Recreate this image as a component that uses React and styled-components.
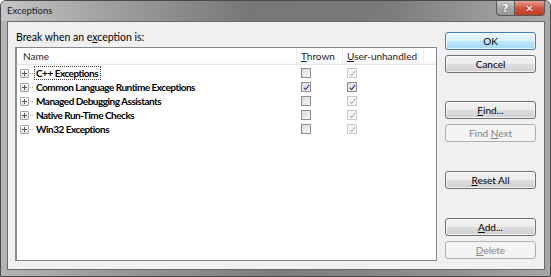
import React from "react";
import styled, { createGlobalStyle } from "styled-components";

const Global = createGlobalStyle`
  html, body { margin: 0; padding: 0; background: #fff; }
  body { font-family: Lato, "Noto Sans", sans-serif; }
`;

const Window = styled.div`
  width: 551px;
  height: 277px;
  box-sizing: border-box;
  display: flex;
  flex-direction: column;
  border: 1px solid #4a4a4a;
  border-radius: 6px 6px 0 0;
  background: linear-gradient(to right, #b4b4b4 0%, #9a9a9a 20%, #7c7c7c 50%, #8e8e8e 80%, #a6a6a6 100%);
  overflow: hidden;
`;

const TitleBar = styled.div`
  height: 20px;
  flex: none;
  display: flex;
  align-items: flex-start;
  padding-left: 6px;
  background: linear-gradient(to right, #c6c6c6 0%, #a2a2a2 18%, #777 45%, #7a7a7a 70%, #9c9c9c 90%, #aaaaaa 100%);
`;

const Title = styled.span`
  font-size: 9.5px;
  line-height: 19px;
  color: #1a1a1a;
  flex: 1;
`;

const Caption = styled.div`
  display: flex;
  margin-right: 5px;
`;

const CapBtn = styled.div`
  height: 15px;
  width: ${(p) => p.w}px;
  box-sizing: border-box;
  border: 1px solid #5a5a5a;
  border-top: none;
  display: flex;
  align-items: center;
  justify-content: center;
  font-family: "DejaVu Sans", sans-serif;
  font-weight: bold;
  font-size: 10px;
  color: #fff;
  background: ${(p) =>
    p.close
      ? "linear-gradient(to bottom, #e8a092 0%, #d0553f 50%, #c23a22 100%)"
      : "linear-gradient(to bottom, #c8c8c8 0%, #a8a8a8 50%, #989898 100%)"};
  border-radius: ${(p) => (p.close ? "0 0 4px 0" : "0 0 0 4px")};
  border-left: ${(p) => (p.close ? "none" : "1px solid #5a5a5a")};
  text-shadow: 0 0 2px rgba(0,0,0,0.5);
`;

const Client = styled.div`
  flex: 1;
  margin: 0 5px 6px 6px;
  background: #f0f0f0;
  border: 1px solid #6a6a6a;
  display: flex;
  padding: 8px 8px 8px 7px;
  gap: 8px;
`;

const Left = styled.div`
  flex: 1;
  display: flex;
  flex-direction: column;
`;

const Label = styled.div`
  font-size: 10.5px;
  color: #000;
  height: 17px;
  line-height: 14px;
  padding-left: 1px;
`;

const U = styled.span`
  text-decoration: underline;
`;

const ListBox = styled.div`
  flex: 1;
  background: #fff;
  border: 1px solid #828790;
  border-left: 2px solid #8e8e8e;
  display: flex;
  flex-direction: column;
`;

const Header = styled.div`
  height: 16px;
  display: grid;
  grid-template-columns: 280px 46px 81px 1fr;
  border-bottom: 1px solid #e5e5e5;
  background: linear-gradient(to bottom, #ffffff 0%, #ffffff 60%, #f7f8f9 100%);
`;

const HeadCell = styled.div`
  font-size: 10px;
  line-height: 16px;
  color: #1e1e1e;
  padding-left: ${(p) => p.pad || 4}px;
  border-right: ${(p) => (p.last ? "none" : "1px solid #ececec")};
  white-space: nowrap;
`;

const Rows = styled.div`
  display: flex;
  flex-direction: column;
  padding-top: 1px;
`;

const Row = styled.div`
  height: 14px;
  display: grid;
  grid-template-columns: 280px 46px 81px 1fr;
  align-items: center;
`;

const NameCell = styled.div`
  display: flex;
  align-items: center;
  padding-left: 3px;
`;

const Expander = styled.div`
  width: 9px;
  height: 9px;
  box-sizing: border-box;
  border: 1px solid #a6a6a6;
  border-radius: 1px;
  background: linear-gradient(#fff, #e2e2e2);
  position: relative;
  margin-right: 1px;
  &::before {
    content: "";
    position: absolute;
    left: 1px;
    top: 3px;
    width: 5px;
    height: 1px;
    background: #555;
  }
  &::after {
    content: "";
    position: absolute;
    left: 3px;
    top: 1px;
    width: 1px;
    height: 5px;
    background: #555;
  }
`;

const Dots = styled.div`
  width: 3px;
  border-top: 1px dotted #a0a0a0;
  margin-right: 1px;
`;

const NameText = styled.span`
  font-size: 10px;
  font-weight: bold;
  letter-spacing: -0.5px;
  line-height: 12px;
  padding: 0 2px 0 1px;
  color: #000;
  border: 1px dotted ${(p) => (p.focus ? "#444" : "transparent")};
  white-space: nowrap;
`;

const CheckCell = styled.div`
  padding-left: 4px;
  display: flex;
  align-items: center;
`;

const Box = styled.div`
  width: 10px;
  height: 10px;
  box-sizing: border-box;
  border: 1px solid ${(p) => (p.disabled ? "#c9c9c9" : "#8f8f8f")};
  background: ${(p) =>
    p.disabled ? "#f7f7f7" : "linear-gradient(135deg, #dcdcdc, #f6f6f6)"};
  display: flex;
  align-items: center;
  justify-content: center;
`;

const Buttons = styled.div`
  width: 91px;
  display: flex;
  flex-direction: column;
  padding-top: 2px;
`;

const Btn = styled.div`
  height: 18px;
  box-sizing: border-box;
  margin-top: ${(p) => p.mt || 0}px;
  border: 1px solid ${(p) => (p.disabled ? "#adb2b5" : p.def ? "#3c7fb1" : "#707070")};
  border-radius: 3px;
  background: ${(p) =>
    p.disabled
      ? "#f4f4f4"
      : p.def
      ? "linear-gradient(to bottom, #eaf6fd 0%, #d9f0fc 50%, #bee6fd 51%, #a7d9f5 100%)"
      : "linear-gradient(to bottom, #f2f2f2 0%, #ebebeb 50%, #dddddd 51%, #cfcfcf 100%)"};
  box-shadow: inset 0 0 0 1px ${(p) => (p.disabled ? "transparent" : "rgba(255,255,255,0.7)")};
  font-size: 10px;
  line-height: 16px;
  text-align: center;
  color: ${(p) => (p.disabled ? "#838383" : "#000")};
`;

const Check = ({ disabled }) => (
  <svg width="7" height="7" viewBox="0 0 7 7">
    <path
      d="M0.8 3.6 L2.6 5.6 L6.2 0.8"
      fill="none"
      stroke={disabled ? "#b4b4b4" : "#2a3f8a"}
      strokeWidth="1.1"
    />
  </svg>
);

const rows = [
  { name: "C++ Exceptions", thrown: false, focus: true },
  { name: "Common Language Runtime Exceptions", thrown: true },
  { name: "Managed Debugging Assistants", thrown: false },
  { name: "Native Run-Time Checks", thrown: false },
  { name: "Win32 Exceptions", thrown: false },
];

export default function App() {
  return (
    <>
      <Global />
      <Window>
        <TitleBar>
          <Title>Exceptions</Title>
          <Caption>
            <CapBtn w={19}>?</CapBtn>
            <CapBtn w={30} close>
              ✕
            </CapBtn>
          </Caption>
        </TitleBar>
        <Client>
          <Left>
            <Label>
              Break when an e<U>x</U>ception is:
            </Label>
            <ListBox>
              <Header>
                <HeadCell pad={6}>Name</HeadCell>
                <HeadCell>
                  <U>T</U>hrown
                </HeadCell>
                <HeadCell>
                  <U>U</U>ser-unhandled
                </HeadCell>
                <HeadCell last />
              </Header>
              <Rows>
                {rows.map((r) => (
                  <Row key={r.name}>
                    <NameCell>
                      <Expander />
                      <Dots />
                      <NameText focus={r.focus}>{r.name}</NameText>
                    </NameCell>
                    <CheckCell>
                      <Box>{r.thrown && <Check />}</Box>
                    </CheckCell>
                    <CheckCell>
                      <Box disabled={!r.thrown}>
                        <Check disabled={!r.thrown} />
                      </Box>
                    </CheckCell>
                    <div />
                  </Row>
                ))}
              </Rows>
            </ListBox>
          </Left>
          <Buttons>
            <Btn def>OK</Btn>
            <Btn mt={5}>Cancel</Btn>
            <Btn mt={28}>
              <U>F</U>ind...
            </Btn>
            <Btn mt={5} disabled>
              Find <U>N</U>ext
            </Btn>
            <Btn mt={29}>
              <U>R</U>eset All
            </Btn>
            <Btn mt={29}>
              <U>A</U>dd...
            </Btn>
            <Btn mt={5} disabled>
              <U>D</U>elete
            </Btn>
          </Buttons>
        </Client>
      </Window>
    </>
  );
}
